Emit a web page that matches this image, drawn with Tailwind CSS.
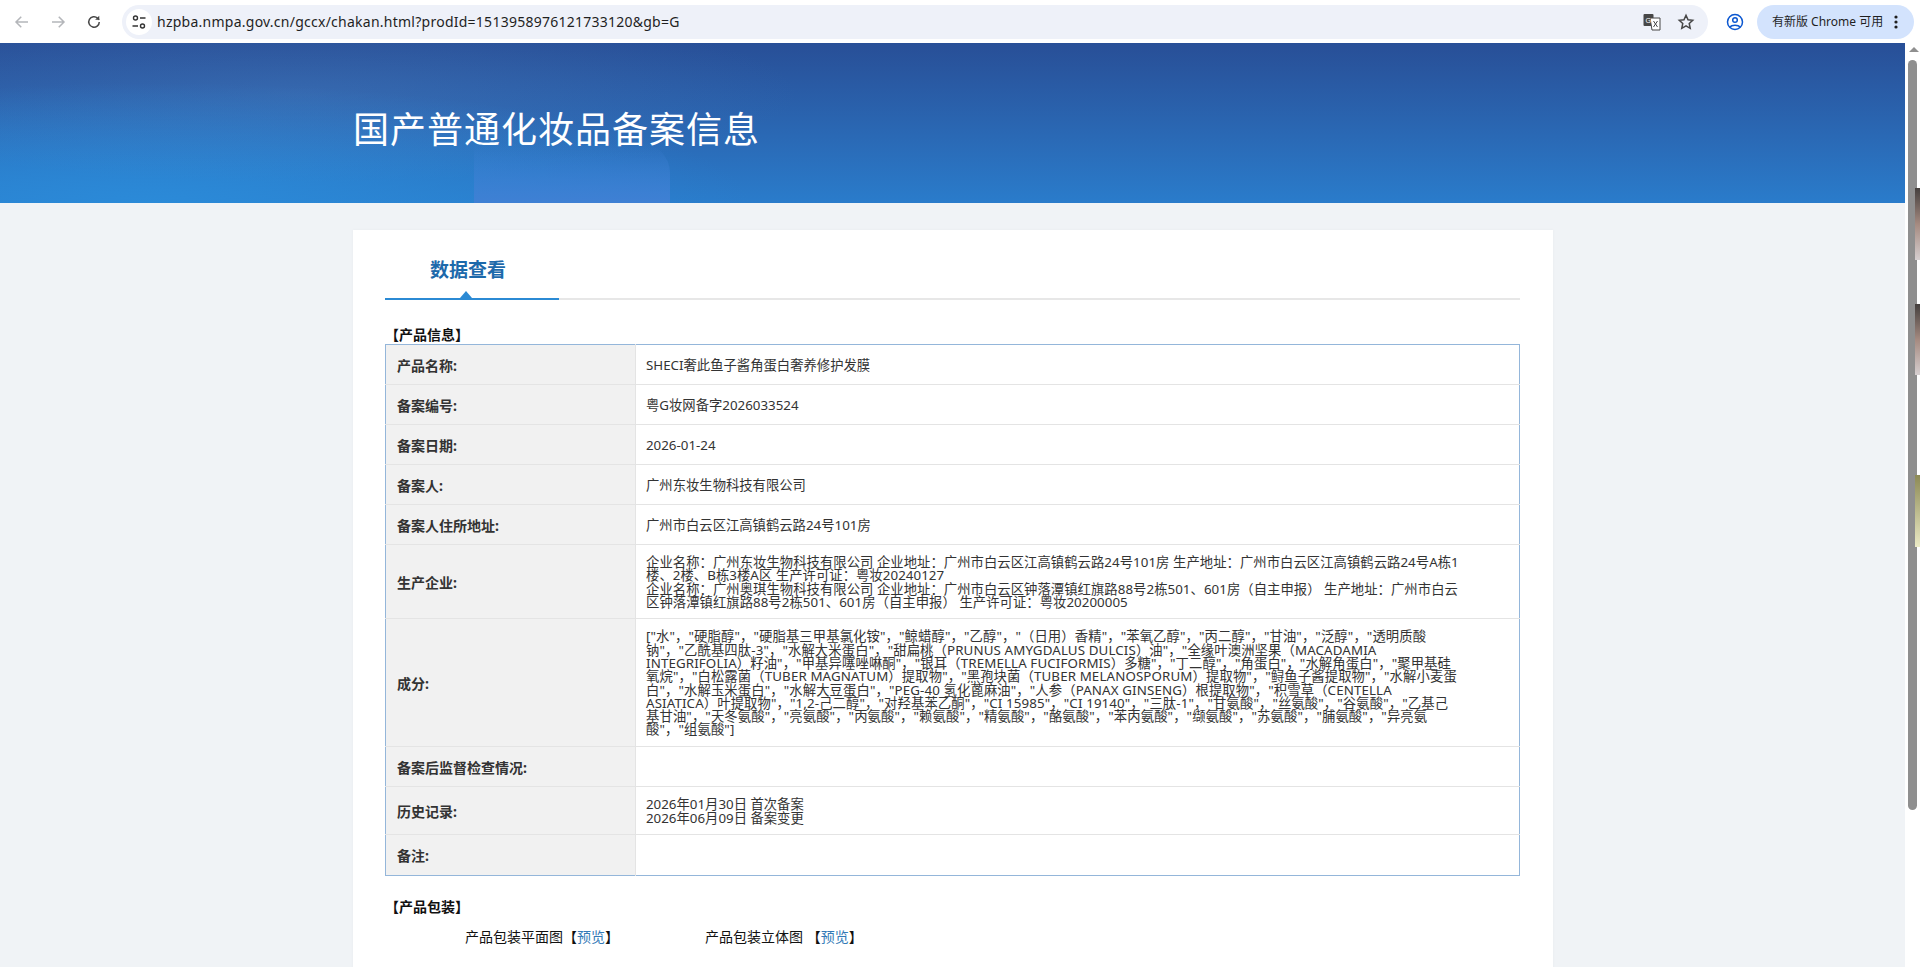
<!DOCTYPE html>
<html lang="zh-CN">
<head>
  <meta charset="UTF-8" />
  <title>国产普通化妆品备案信息</title>
  <script src="https://cdn.jsdelivr.net/npm/@tailwindcss/browser@4"></script>
</head>
<body class="h-screen overflow-hidden bg-white font-['Noto_Sans','Noto_Sans_CJK_SC',sans-serif]">

  <!-- browser toolbar -->
  <div class="h-[43px] flex items-center bg-white relative">
    <div class="w-[122px] flex items-center pl-[13px] gap-[18px] shrink-0">
      <svg class="w-[18px] h-[18px]" viewBox="0 0 24 24" fill="none" stroke="#b4b6ba" stroke-width="2"><path d="M20 12H5M11 5l-7 7 7 7"/></svg>
      <svg class="w-[18px] h-[18px]" viewBox="0 0 24 24" fill="none" stroke="#b4b6ba" stroke-width="2"><path d="M4 12h15M13 5l7 7-7 7"/></svg>
      <svg class="w-[18px] h-[18px]" viewBox="0 0 24 24" fill="none" stroke="#474747" stroke-width="2"><path d="M19 12a7 7 0 1 1-2.2-5.1L19 9"/><path d="M19 3.5V9h-5.5" fill="#474747" stroke="none"/></svg>
    </div>
    <div class="w-[1586px] h-[34px] rounded-full bg-[#eef1f9] flex items-center shrink-0">
      <div class="w-[26px] h-[26px] ml-[4px] rounded-full bg-white flex items-center justify-center shrink-0">
        <svg class="w-[16px] h-[16px]" viewBox="0 0 16 16" fill="none" stroke="#333" stroke-width="1.4"><circle cx="4.5" cy="4" r="2"/><path d="M9 4h5.5M1.5 12H7"/><circle cx="11.5" cy="12" r="2"/></svg>
      </div>
      <span class="ml-[5px] text-[14px] text-[#1f1f1f] tracking-[0.25px] whitespace-nowrap">hzpba.nmpa.gov.cn/gccx/chakan.html?prodId=1513958976121733120&amp;gb=G</span>
      <div class="ml-auto flex items-center gap-[16px] pr-[13px]">
        <svg class="w-[18px] h-[18px]" viewBox="0 0 18 18"><rect x="0.5" y="1" width="10" height="12" rx="1" fill="#474747"/><path d="M7 5h10v12H9z" fill="#fff" stroke="#474747"/><text x="2.5" y="10" font-size="7" fill="#fff" font-family="Liberation Sans">G</text><path d="M10.5 8l4 6M14.5 8l-4 6" stroke="#474747" stroke-width="1"/></svg>
        <svg class="w-[18px] h-[18px]" viewBox="0 0 24 24" fill="none" stroke="#474747" stroke-width="2"><path d="M12 3l2.7 6 6.3.7-4.7 4.3 1.3 6.5-5.6-3.3-5.6 3.3L7.7 14 3 9.700l6.300-.7z"/></svg>
      </div>
    </div>
    <svg class="w-[18px] h-[18px] ml-[18px] shrink-0" viewBox="0 0 18 18" fill="none" stroke="#0b57d0" stroke-width="1.500"><circle cx="9" cy="9" r="7.500"/><circle cx="9" cy="7" r="2.300"/><path d="M3.800 14c2-2.500 8.400-2.500 10.400 0"/></svg>
    <div class="w-[157px] h-[34px] ml-[13px] rounded-full bg-[#d3e3fd] flex items-center pl-[15px] shrink-0">
      <span class="text-[12px] text-[#1f1f1f] whitespace-nowrap">有新版 Chrome 可用</span>
      <svg class="w-[4px] h-[14px] ml-[11px]" viewBox="0 0 4 14" fill="#1f1f1f"><circle cx="2" cy="2" r="1.600"/><circle cx="2" cy="7" r="1.600"/><circle cx="2" cy="12" r="1.600"/></svg>
    </div>
  </div>

  <div class="flex h-[924px]">
    <!-- page -->
    <div class="w-[1905px] bg-[#f0f3f6] shrink-0 overflow-hidden">
      <div class="h-[160px] relative overflow-hidden bg-gradient-to-b from-[#284f97] to-[#2a7ccb]">
        <div class="absolute inset-0 bg-[radial-gradient(ellipse_600px_120px_at_150px_160px,#2b8ad8,transparent)]"></div>
        <div class="absolute inset-0 bg-[radial-gradient(ellipse_500px_90px_at_300px_50px,rgba(90,140,200,0.25),transparent)]"></div>
        <div class="absolute left-[474px] top-[100px] w-[196px] h-[60px] rounded-tr-[30px] bg-gradient-to-t from-[#3f80d4] to-transparent"></div>
        <h1 class="relative pl-[353px] pt-[62px] text-[36px] leading-[50px] font-normal text-white whitespace-nowrap tracking-[1px]">国产普通化妆品备案信息</h1>
      </div>

      <div class="w-[1200px] ml-[353px] mt-[27px] bg-white pl-[32px] pt-[27px] h-[800px] shadow-[0_0_3px_rgba(0,0,0,0.04)]">
        <!-- tab -->
        <div class="h-[43px] border-b-2 border-[#e7e7e7] relative w-[1135px]">
          <div class="w-[174px] h-[43px] border-b-2 border-[#2b8ad4] relative">
            <div class="pl-[45px] text-[19px] leading-[26px] font-bold text-[#1d69ab] whitespace-nowrap">数据查看</div>
            <div class="absolute left-[75px] bottom-0 w-0 h-0 border-x-[6px] border-x-transparent border-b-[7px] border-b-[#2b8ad4]"></div>
          </div>
        </div>

        <div class="h-[44px] pt-[25px] text-[14px] leading-[19px] font-bold text-[#111]">【产品信息】</div>

        <table class="w-[1135px] table-fixed border-collapse border border-[#94b6da] text-[13.33px] leading-[13.3px] text-[#333] [&_td]:pt-[2px] [&_th]:pt-[2px] [&_th]:text-[14px]">
          <colgroup><col class="w-[250px]" /><col /></colgroup>
          <tbody>
            <tr class="h-[40px]">
              <th class="bg-[#f1f1f1] text-left font-bold pl-[11px] border-b border-r border-[#e4e4e4]">产品名称:</th>
              <td class="pl-[10px] border-b border-[#e4e4e4]">SHECI奢此鱼子酱角蛋白奢养修护发膜</td>
            </tr>
            <tr class="h-[40px]">
              <th class="bg-[#f1f1f1] text-left font-bold pl-[11px] border-b border-r border-[#e4e4e4]">备案编号:</th>
              <td class="pl-[10px] border-b border-[#e4e4e4]">粤G妆网备字2026033524</td>
            </tr>
            <tr class="h-[40px]">
              <th class="bg-[#f1f1f1] text-left font-bold pl-[11px] border-b border-r border-[#e4e4e4]">备案日期:</th>
              <td class="pl-[10px] border-b border-[#e4e4e4]">2026-01-24</td>
            </tr>
            <tr class="h-[40px]">
              <th class="bg-[#f1f1f1] text-left font-bold pl-[11px] border-b border-r border-[#e4e4e4]">备案人:</th>
              <td class="pl-[10px] border-b border-[#e4e4e4]">广州东妆生物科技有限公司</td>
            </tr>
            <tr class="h-[40px]">
              <th class="bg-[#f1f1f1] text-left font-bold pl-[11px] border-b border-r border-[#e4e4e4]">备案人住所地址:</th>
              <td class="pl-[10px] border-b border-[#e4e4e4]">广州市白云区江高镇鹤云路24号101房</td>
            </tr>
            <tr class="h-[74px]">
              <th class="bg-[#f1f1f1] text-left font-bold pl-[11px] border-b border-r border-[#e4e4e4]">生产企业:</th>
              <td class="pl-[10px] border-b border-[#e4e4e4] whitespace-nowrap tracking-[0.05px]">企业名称：广州东妆生物科技有限公司 企业地址：广州市白云区江高镇鹤云路24号101房 生产地址：广州市白云区江高镇鹤云路24号A栋1<br />楼、2楼、B栋3楼A区 生产许可证：粤妆20240127<br />企业名称：广州奥琪生物科技有限公司 企业地址：广州市白云区钟落潭镇红旗路88号2栋501、601房（自主申报） 生产地址：广州市白云<br />区钟落潭镇红旗路88号2栋501、601房（自主申报） 生产许可证：粤妆20200005</td>
            </tr>
            <tr class="h-[128px]">
              <th class="bg-[#f1f1f1] text-left font-bold pl-[11px] border-b border-r border-[#e4e4e4]">成分:</th>
              <td class="pl-[10px] border-b border-[#e4e4e4] whitespace-nowrap tracking-[0.12px]">["水"，"硬脂醇"，"硬脂基三甲基氯化铵"，"鲸蜡醇"，"乙醇"，"（日用）香精"，"苯氧乙醇"，"丙二醇"，"甘油"，"泛醇"，"透明质酸<br />钠"，"乙酰基四肽-3"，"水解大米蛋白"，"甜扁桃（PRUNUS AMYGDALUS DULCIS）油"，"全缘叶澳洲坚果（MACADAMIA<br />INTEGRIFOLIA）籽油"，"甲基异噻唑啉酮"，"银耳（TREMELLA FUCIFORMIS）多糖"，"丁二醇"，"角蛋白"，"水解角蛋白"，"聚甲基硅<br />氧烷"，"白松露菌（TUBER MAGNATUM）提取物"，"黑孢块菌（TUBER MELANOSPORUM）提取物"，"鲟鱼子酱提取物"，"水解小麦蛋<br />白"，"水解玉米蛋白"，"水解大豆蛋白"，"PEG-40 氢化蓖麻油"，"人参（PANAX GINSENG）根提取物"，"积雪草（CENTELLA<br />ASIATICA）叶提取物"，"1,2-己二醇"，"对羟基苯乙酮"，"CI 15985"，"CI 19140"，"三肽-1"，"甘氨酸"，"丝氨酸"，"谷氨酸"，"乙基己<br />基甘油"，"天冬氨酸"，"亮氨酸"，"丙氨酸"，"赖氨酸"，"精氨酸"，"酪氨酸"，"苯丙氨酸"，"缬氨酸"，"苏氨酸"，"脯氨酸"，"异亮氨<br />酸"，"组氨酸"]</td>
            </tr>
            <tr class="h-[40px]">
              <th class="bg-[#f1f1f1] text-left font-bold pl-[11px] border-b border-r border-[#e4e4e4]">备案后监督检查情况:</th>
              <td class="pl-[10px] border-b border-[#e4e4e4]"></td>
            </tr>
            <tr class="h-[48px]">
              <th class="bg-[#f1f1f1] text-left font-bold pl-[11px] border-b border-r border-[#e4e4e4]">历史记录:</th>
              <td class="pl-[10px] border-b border-[#e4e4e4]">2026年01月30日 首次备案<br />2026年06月09日 备案变更</td>
            </tr>
            <tr class="h-[41px]">
              <th class="bg-[#f1f1f1] text-left font-bold pl-[11px] border-r border-[#e4e4e4]">备注:</th>
              <td class="pl-[10px]"></td>
            </tr>
          </tbody>
        </table>

        <div class="pt-[21px] text-[14px] leading-[19px] font-bold text-[#111]">【产品包装】</div>
        <div class="flex pl-[80px] pt-[11px] text-[14px] leading-[20px] text-[#111]">
          <div class="w-[240px] whitespace-nowrap">产品包装平面图【<a class="text-[#337ab7]">预览</a>】</div>
          <div class="whitespace-nowrap">产品包装立体图 【<a class="text-[#337ab7]">预览</a>】</div>
        </div>
      </div>
    </div>

    <!-- scrollbar, with a sliver of the window behind it -->
    <div class="w-[15px] bg-white relative shrink-0">
      <div class="absolute left-[4px] top-[4px] w-0 h-0 border-x-[5px] border-x-transparent border-b-[5px] border-b-[#8f8f8f]"></div>
      <div class="absolute left-[3px] top-[17px] w-[9px] h-[750px] rounded-full bg-[#8f8f8f]"></div>
      <div class="absolute right-0 top-[145px] w-[5px] h-[72px] bg-gradient-to-b from-[#45403e] via-[#a58a80] to-[#d6cfd0]"></div>
      <div class="absolute right-0 top-[261px] w-[5px] h-[71px] bg-gradient-to-b from-[#45403e] via-[#a58a80] to-[#d6cfd0]"></div>
      <div class="absolute right-0 top-[432px] w-[5px] h-[72px] bg-gradient-to-b from-[#8d8a55] to-[#ecebc6]"></div>
    </div>
  </div>

</body>
</html>
